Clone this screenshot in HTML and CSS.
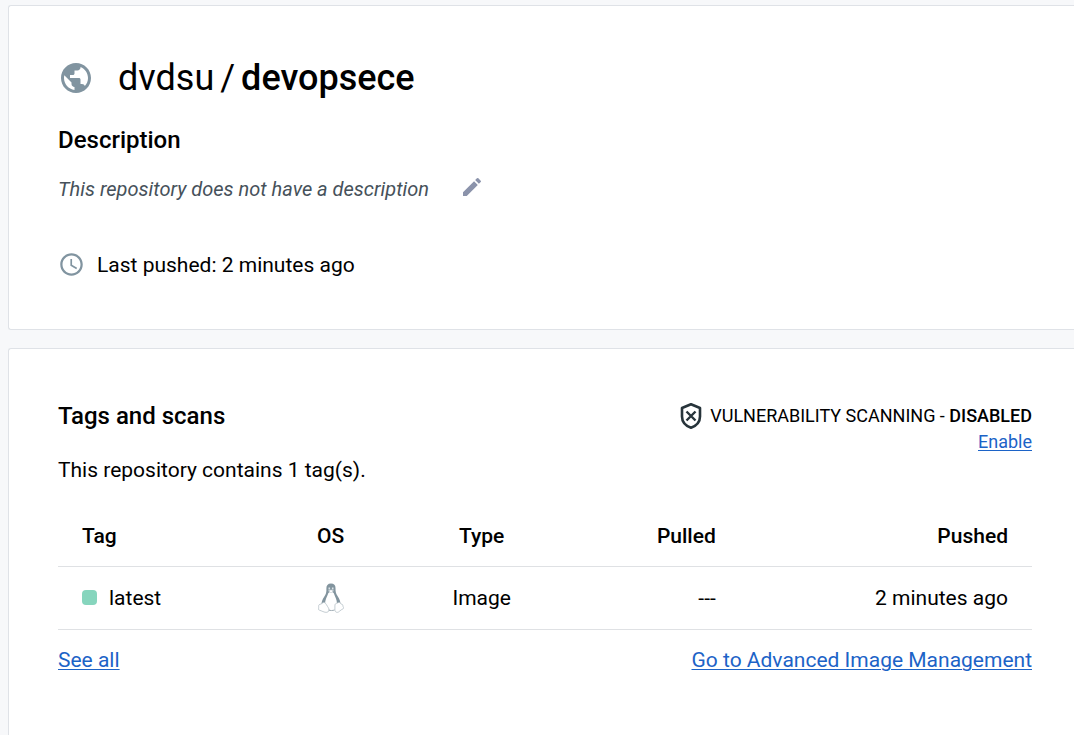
FILE: index.html
```html
<!DOCTYPE html>
<html lang="en">
<head>
<meta charset="utf-8">
<meta name="viewport" content="width=device-width, initial-scale=1">
<title>dvdsu/devopsece</title>
<link rel="stylesheet" href="styles.css">
</head>
<body>
<main class="page">
  <section class="card">
    <h1 class="repo">
      <svg class="repo-icon" viewBox="0 0 24 24" aria-hidden="true"><path d="M12 2C6.480 2 2 6.480 2 12s4.480 10 10 10 10-4.480 10-10S17.520 2 12 2zm-1 17.930c-3.950-.49-7-3.850-7-7.930 0-.62.080-1.210.21-1.790L9 15v1c0 1.100.9 2 2 2v1.930zm6.900-2.540c-.26-.81-1-1.390-1.900-1.390h-1v-3c0-.55-.45-1-1-1H8v-2h2c.55 0 1-.45 1-1V7h2c1.100 0 2-.9 2-2v-.41c2.930 1.190 5 4.060 5 7.410 0 2.080-.8 3.970-2.100 5.390z"/></svg>
      <span class="repo-name"><span>dvdsu</span><span class="slash">/</span><strong>devopsece</strong></span>
    </h1>
    <h2 class="heading">Description</h2>
    <div class="description">
      <em>This repository does not have a description</em>
      <button class="edit" type="button" aria-label="Edit description"><svg viewBox="0 0 24 24" aria-hidden="true"><path d="M3 17.250V21h3.750L17.810 9.940l-3.750-3.750L3 17.250zM20.710 7.040a1 1 0 0 0 0-1.410l-2.340-2.340a1 1 0 0 0-1.410 0l-1.830 1.830 3.750 3.750 1.830-1.830z"/></svg></button>
    </div>
    <p class="pushed">
      <svg class="clock" viewBox="0 0 24 24" aria-hidden="true"><path d="M11.990 2C6.470 2 2 6.480 2 12s4.470 10 9.990 10C17.520 22 22 17.520 22 12S17.520 2 11.990 2zM12 20c-4.420 0-8-3.580-8-8s3.580-8 8-8 8 3.580 8 8-3.580 8-8 8zm.5-13H11v6l5.250 3.150.75-1.230-4.500-2.670z"/></svg>
      <span>Last pushed: 2 minutes ago</span>
    </p>
  </section>

  <section class="card tags">
    <header class="tags-head">
      <div>
        <h2 class="heading">Tags and scans</h2>
        <p class="count">This repository contains 1 tag(s).</p>
      </div>
      <div class="scan">
        <p class="scan-status">
          <svg class="shield" viewBox="0 0 22 28" fill="none" stroke="currentColor" aria-hidden="true"><path d="M11 2.200 20 6v8.500c0 5.300-3.700 9.300-9 11.300-5.300-2-9-6-9-11.300V6z" stroke-width="2.600" stroke-linejoin="round"/><path d="m6.500 9.500 9 9m0-9-9 9" stroke-width="2.400"/></svg>
          <span>VULNERABILITY SCANNING - <strong>DISABLED</strong></span>
        </p>
        <a href="#enable">Enable</a>
      </div>
    </header>
    <table class="table">
      <thead>
        <tr><th class="col-tag">Tag</th><th class="col-os">OS</th><th class="col-type">Type</th><th class="col-pulled">Pulled</th><th class="col-pushed">Pushed</th></tr>
      </thead>
      <tbody>
        <tr>
          <td class="col-tag"><span class="tag"><span class="dot"></span>latest</span></td>
          <td class="col-os"><svg class="linux" viewBox="0 0 26 32" role="img" aria-label="Linux">
            <path d="M13 1.500c-3.200 0-4.800 2-4.600 5 .2 4-.5 5.600-2.200 8.300C4.300 17.500 3.500 20 3.500 22.500L8 28h10l4.500-5.500c0-3-1-5.500-2.800-8.200-1.900-2.800-2.200-4.600-2.200-8.300 0-3-1.500-4.500-4.500-4.500z" fill="#82949e"/>
            <path d="M13 10c1.700 0 2.600.5 3.100 2 .8 2.300 2.900 5.500 2.900 10L17 28H9l-2-6c0-4.500 2.200-7.500 3-10 .4-1.500 1.300-2 3-2z" fill="#fff"/>
            <path d="M10.500 5.500h1.600v2h-1.600zm3.400 0h1.600v2h-1.600z" fill="#dce3e7"/>
            <path d="M10.200 8.800 13 7.800l2.800 1-2.800 2z" fill="#fff" stroke="#b1bcc3" stroke-width=".5"/>
            <path d="M2 22.300c2-.2 2.800-2.300 4.300-1.800 1.800.7 2.700 3.500 4.100 5.300 1.400 1.900.7 4-1.500 4.500-2.500.5-5.500-1.700-7.500-2.100-1.500-.4-.6-1.700-.7-2.900-.1-1.300-.3-2.600 1.300-3zm22 .1c-1.500-.2-1.400-1.900-2.800-2-1.500 0-2 1-2.800 1-.9 0-1.500.8-1.500 2.500v4c0 2.500 2.800 3.200 4.400 1.500 1.200-1.300 2.600-1.900 3.800-2.600 1-.7.300-1.400 0-2.200-.5-.9.100-2-1.100-2.200z" fill="#fff" stroke="#b5c0c7" stroke-width=".8"/>
            <path d="M10.500 28c2 .7 4 .7 6 0" fill="none" stroke="#a2afb7"/>
          </svg></td>
          <td class="col-type">Image</td>
          <td class="col-pulled">---</td>
          <td class="col-pushed">2 minutes ago</td>
        </tr>
      </tbody>
    </table>
    <footer class="links">
      <a href="#tags">See all</a>
      <a href="#images">Go to Advanced Image Management</a>
    </footer>
  </section>
</main>
</body>
</html>
```
FILE: styles.css
```css
* { box-sizing: border-box; }
body {
  margin: 0;
  background: #f7f8fa;
  color: #000;
  font: 400 21px/24px Roboto, "Liberation Sans", sans-serif;
}
h1, h2, p { margin: 0; }
strong { font-weight: 500; }
svg { display: block; fill: currentColor; }
svg[fill="none"] { fill: none; }
a {
  color: #1c63c7;
  text-decoration: underline;
  text-decoration-thickness: 1px;
  text-underline-offset: 2px;
}

.page {
  display: flex;
  flex-direction: column;
  gap: 18px;
  min-height: 100vh;
  padding: 5px 0 0 8px;
}
.card {
  padding: 48px 42px 51px 49px;
  background: #fff;
  border: 1px solid #dfe2e7;
  border-right: 0;
  border-radius: 3px 0 0 3px;
}
.tags { flex: 1; border-bottom: 0; border-bottom-left-radius: 0; }

.repo {
  display: flex;
  align-items: center;
  gap: 24px;
  font-size: 36px;
  font-weight: 400;
  line-height: 48px;
}
.repo-icon { width: 36px; height: 36px; color: #8194a0; }
.slash { margin: 0 6px; }
.heading { font-size: 24px; font-weight: 500; line-height: 32px; }
.repo + .heading { margin-top: 22px; }
.description {
  display: flex;
  align-items: flex-end;
  gap: 31px;
  margin-top: 19px;
  color: #46515a;
  font-size: 20px;
}
.edit {
  padding: 0 0 2px;
  border: 0;
  background: none;
  color: #8b93ab;
  cursor: pointer;
}
.edit svg { width: 24px; height: 24px; }
.pushed { display: flex; align-items: center; gap: 12px; margin-top: 50px; }
.clock { width: 27px; height: 27px; color: #8194a0; }

.tags-head { display: flex; justify-content: space-between; padding-top: 3px; }
.count { margin-top: 26px; }
.scan { padding-top: 2px; font-size: 18px; text-align: right; }
.scan-status { display: flex; align-items: center; gap: 8px; }
.shield { width: 22px; height: 28px; color: #27343b; }

.table {
  width: 100%;
  margin-top: 24px;
  border-collapse: collapse;
  table-layout: fixed;
}
.table th, .table td {
  height: 63px;
  padding: 0 24px;
  border-bottom: 1px solid #dfe1e4;
}
.table th { height: 60px; font-weight: 500; }
.table .col-tag { width: 20%; text-align: left; }
.col-os { width: 16%; text-align: center; }
.col-type { width: 15%; text-align: center; }
.table .col-pulled { width: 19%; text-align: right; }
.table .col-pushed { width: 30%; text-align: right; }
.tag { display: flex; align-items: center; gap: 12px; }
.dot { width: 15px; height: 15px; border-radius: 4px; background: #86d5bd; }
.linux { width: 26px; height: 32px; margin: 0 auto; }
.links { display: flex; justify-content: space-between; margin-top: 18px; }
```
